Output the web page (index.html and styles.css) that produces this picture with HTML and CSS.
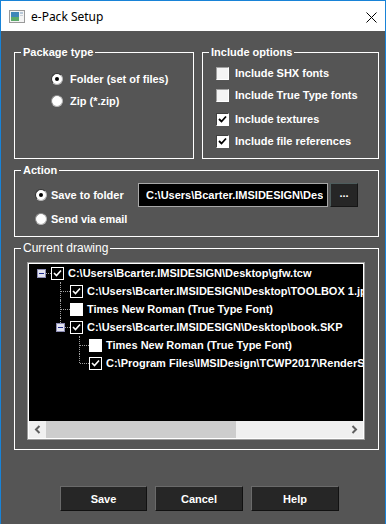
FILE: index.html
```html
<!DOCTYPE html>
<html>
<head>
	<title>e-Pack Setup</title>
	<link rel="stylesheet" href="styles.css">
</head>
<body>
<div class="window">
	<div class="titlebar">
		<svg class="app-icon" width="16" height="13" viewBox="0 0 16 13">
			<rect x="0.5" y="0.5" width="15" height="12" fill="#f4f4f4" stroke="#9a9a9a"/>
			<rect x="2" y="2" width="8" height="9" fill="#3f86b8"/>
			<rect x="2" y="7" width="8" height="4" fill="#5caa6a"/>
			<rect x="11" y="2" width="3" height="2" fill="#b8c8d8"/>
			<rect x="11" y="5" width="3" height="1" fill="#c8d0d8"/>
		</svg>
		<span class="title">e-Pack Setup</span>
		<svg class="close" width="11" height="11" viewBox="0 0 11 11">
			<path d="M0.5 0.5 L10.5 10.5 M10.5 0.5 L0.5 10.5" stroke="#000" stroke-width="1"/>
		</svg>
	</div>

	<div class="client">
		<div class="top-row">
			<fieldset class="group package">
				<legend>Package type</legend>
				<div class="radio-list">
					<div class="opt"><span class="radio on"></span>Folder (set of files)</div>
					<div class="opt"><span class="radio"></span>Zip (*.zip)</div>
				</div>
			</fieldset>
			<fieldset class="group options">
				<legend>Include options</legend>
				<div class="check-list">
					<div class="opt"><span class="check"></span>Include SHX fonts</div>
					<div class="opt"><span class="check"></span>Include True Type fonts</div>
					<div class="opt spaced"><span class="check on"><svg width="11" height="11" viewBox="0 0 11 11"><polyline points="2,5 4.5,7.5 9,2.5" fill="none" stroke="#000" stroke-width="1.8"/></svg></span>Include textures</div>
					<div class="opt"><span class="check on"><svg width="11" height="11" viewBox="0 0 11 11"><polyline points="2,5 4.5,7.5 9,2.5" fill="none" stroke="#000" stroke-width="1.8"/></svg></span>Include file references</div>
				</div>
			</fieldset>
		</div>

		<fieldset class="group action">
			<legend>Action</legend>
			<div class="action-body">
				<div class="action-row first">
					<div class="act-label"><span class="radio on"></span>Save to folder</div>
					<div class="path-box"><span class="path-text">C:\Users\Bcarter.IMSIDESIGN\Desktop</span></div>
					<button class="browse">...</button>
				</div>
				<div class="action-row">
					<div class="act-label"><span class="radio"></span>Send via email</div>
				</div>
			</div>
		</fieldset>

		<fieldset class="group drawing">
			<legend>Current drawing</legend>
			<div class="tree-box">
				<div class="tree">
					<div class="node">
						<span class="twig root"><span class="expander"></span></span>
						<span class="tick on"><svg width="11" height="11" viewBox="0 0 11 11"><polyline points="2,5 4.5,7.5 9,2.5" fill="none" stroke="#fff" stroke-width="1.6"/></svg></span>
						<span class="label">C:\Users\Bcarter.IMSIDESIGN\Desktop\gfw.tcw</span>
					</div>
					<div class="node">
						<span class="twig"></span><span class="twig tee"></span>
						<span class="tick on"><svg width="11" height="11" viewBox="0 0 11 11"><polyline points="2,5 4.5,7.5 9,2.5" fill="none" stroke="#fff" stroke-width="1.6"/></svg></span>
						<span class="label">C:\Users\Bcarter.IMSIDESIGN\Desktop\TOOLBOX 1.jpg</span>
					</div>
					<div class="node">
						<span class="twig"></span><span class="twig tee"></span>
						<span class="tick"></span>
						<span class="label">Times New Roman (True Type Font)</span>
					</div>
					<div class="node">
						<span class="twig"></span><span class="twig elbow"><span class="expander"></span></span>
						<span class="tick on"><svg width="11" height="11" viewBox="0 0 11 11"><polyline points="2,5 4.5,7.5 9,2.5" fill="none" stroke="#fff" stroke-width="1.6"/></svg></span>
						<span class="label">C:\Users\Bcarter.IMSIDESIGN\Desktop\book.SKP</span>
					</div>
					<div class="node">
						<span class="twig"></span><span class="twig"></span><span class="twig tee"></span>
						<span class="tick"></span>
						<span class="label">Times New Roman (True Type Font)</span>
					</div>
					<div class="node">
						<span class="twig"></span><span class="twig"></span><span class="twig elbow"></span>
						<span class="tick on"><svg width="11" height="11" viewBox="0 0 11 11"><polyline points="2,5 4.5,7.5 9,2.5" fill="none" stroke="#fff" stroke-width="1.6"/></svg></span>
						<span class="label">C:\Program Files\IMSIDesign\TCWP2017\RenderStyles\Default.rst</span>
					</div>
				</div>
				<div class="hscroll">
					<span class="arrow"><svg width="7" height="9" viewBox="0 0 7 9"><polyline points="5.5,1 2,4.5 5.5,8" fill="none" stroke="#606060" stroke-width="2"/></svg></span>
					<span class="thumb"></span>
					<span class="track"></span>
					<span class="arrow"><svg width="7" height="9" viewBox="0 0 7 9"><polyline points="1.5,1 5,4.5 1.5,8" fill="none" stroke="#606060" stroke-width="2"/></svg></span>
				</div>
			</div>
		</fieldset>

		<div class="buttons">
			<button class="btn">Save</button>
			<button class="btn">Cancel</button>
			<button class="btn">Help</button>
		</div>
	</div>
</div>
</body>
</html>
```

FILE: styles.css
```css
body {
	margin: 0;
	font-family: "Liberation Sans", Arial, sans-serif;
	font-size: 11px;
	font-weight: bold;
	color: #fff;
}

.window {
	width: 384px;
	height: 523px;
	border: 1px solid #1883d7;
	border-bottom: none;
	background: #555555;
}

/* title bar */
.titlebar {
	height: 30px;
	background: #fff;
	display: flex;
	align-items: center;
	color: #000;
}

.app-icon {
	margin-left: 8px;
	margin-top: 1px;
}

.title {
	margin-left: 6px;
	font-family: "Noto Sans", sans-serif;
	font-weight: normal;
	font-size: 12px;
	flex: 1;
}

.close {
	margin-right: 8px;
	margin-top: 2px;
}

/* dialog area */
.client {
	padding: 14px 6px 0 13px;
}

.top-row {
	display: flex;
	gap: 8px;
}

.group {
	margin: 0;
	padding: 0;
	border: 1px solid #fff;
	box-sizing: border-box;
	min-width: 0;
}

.group legend {
	margin-left: 6px;
	padding: 0 2px;
	line-height: 14px;
	height: 14px;
}

.package {
	width: 180px;
	height: 114px;
}

.options {
	width: 177px;
	height: 114px;
}

.action {
	height: 74px;
	margin-top: 4px;
}

.drawing {
	height: 209px;
	margin-top: 4px;
}

.drawing legend {
	font-weight: normal;
	font-size: 12px;
}

.opt {
	display: flex;
	align-items: center;
	height: 22px;
}

.radio-list {
	padding: 9px 0 0 36px;
}

.radio-list .radio {
	margin-right: 7px;
}

.check-list {
	padding: 3px 0 0 13px;
}

.check-list .spaced {
	margin-top: 2px;
}

.radio {
	width: 12px;
	height: 12px;
	box-sizing: border-box;
	border-radius: 50%;
	background: #fff;
	border: 1px solid #b4b4b4;
	border-top-color: #8a8a8a;
	border-left-color: #8a8a8a;
	display: inline-flex;
	align-items: center;
	justify-content: center;
	flex: none;
}

.radio.on {
	border-color: #303030;
	border-right-color: #b4b4b4;
	border-bottom-color: #b4b4b4;
}

.radio.on::after {
	content: "";
	width: 4px;
	height: 4px;
	border-radius: 50%;
	background: #000;
}

.check {
	width: 13px;
	height: 13px;
	box-sizing: border-box;
	background: #f4f4f4;
	border: 1px solid #fff;
	border-top-color: #a0a0a0;
	border-left-color: #a0a0a0;
	margin-right: 6px;
	display: inline-flex;
	align-items: center;
	justify-content: center;
	flex: none;
}

.check.on {
	background: #fff;
	border-top-color: #404040;
	border-left-color: #404040;
}

/* action */
.action-body {
	padding: 6px 0 0 20px;
}

.action-row {
	display: flex;
	align-items: center;
	height: 23px;
}

.action-row.first {
	height: 24px;
}

.act-label {
	width: 103px;
	display: flex;
	align-items: center;
}

.act-label .radio {
	margin-right: 4px;
}

.path-box {
	width: 190px;
	height: 24px;
	box-sizing: border-box;
	border: 1px solid #a8a8a8;
	background: #000;
	padding: 0 4px 0 7px;
	line-height: 22px;
}

.path-text {
	display: block;
	overflow: hidden;
	white-space: nowrap;
}

.browse {
	width: 28px;
	height: 24px;
	margin-left: 2px;
	padding: 0 0 4px;
	background: #262626;
	color: #fff;
	font-family: inherit;
	font-weight: bold;
	font-size: 11px;
	border: 1px solid #151515;
	border-top-color: #4d5c5c;
	border-left-color: #4d5c5c;
}

/* tree */
.tree-box {
	margin: 7px 0 0 12px;
	width: 338px;
	height: 178px;
	box-sizing: border-box;
	border: 1px solid #9c9c9c;
	padding: 1px;
	background: #fff;
}

.tree {
	height: 157px;
	background: #000;
	overflow: hidden;
	white-space: nowrap;
}

.node {
	display: flex;
	align-items: center;
	height: 18px;
	padding-left: 3px;
}

.twig {
	width: 19px;
	height: 18px;
	flex: none;
	position: relative;
}

.tee::before,
.elbow::before {
	content: "";
	position: absolute;
	left: 9px;
	top: 0;
	height: 18px;
	border-left: 1px dotted #a0a0a0;
}

.elbow::before {
	height: 9px;
}

.tee::after,
.elbow::after,
.root::after {
	content: "";
	position: absolute;
	left: 10px;
	top: 9px;
	width: 9px;
	border-top: 1px dotted #a0a0a0;
}

.expander {
	position: absolute;
	left: 5px;
	top: 5px;
	width: 9px;
	height: 9px;
	box-sizing: border-box;
	border: 1px solid #8c8cb4;
	background: #e4e4f0;
	z-index: 1;
}

.expander::after {
	content: "";
	position: absolute;
	left: 1px;
	top: 3px;
	width: 5px;
	height: 1px;
	background: #1c2a8c;
}

.tick {
	width: 13px;
	height: 13px;
	box-sizing: border-box;
	background: #fff;
	border: 1px solid #fff;
	margin-right: 4px;
	display: inline-flex;
	align-items: center;
	justify-content: center;
	flex: none;
}

.tick.on {
	background: #000;
}

.hscroll {
	height: 17px;
	display: flex;
	background: #f0f0f0;
}

.arrow {
	width: 17px;
	display: flex;
	align-items: center;
	justify-content: center;
}

.thumb {
	width: 190px;
	background: #cdcdcd;
}

.track {
	flex: 1;
}

/* bottom buttons */
.buttons {
	display: flex;
	gap: 8px;
	margin: 36px 0 0 46px;
}

.btn {
	width: 88px;
	height: 25px;
	background: #262626;
	color: #fff;
	font-family: inherit;
	font-weight: bold;
	font-size: 11px;
	border: 1px solid #111;
	border-top-color: #6a6a6a;
	border-left-color: #6a6a6a;
}

.btn:first-child {
	width: 87px;
}
```
